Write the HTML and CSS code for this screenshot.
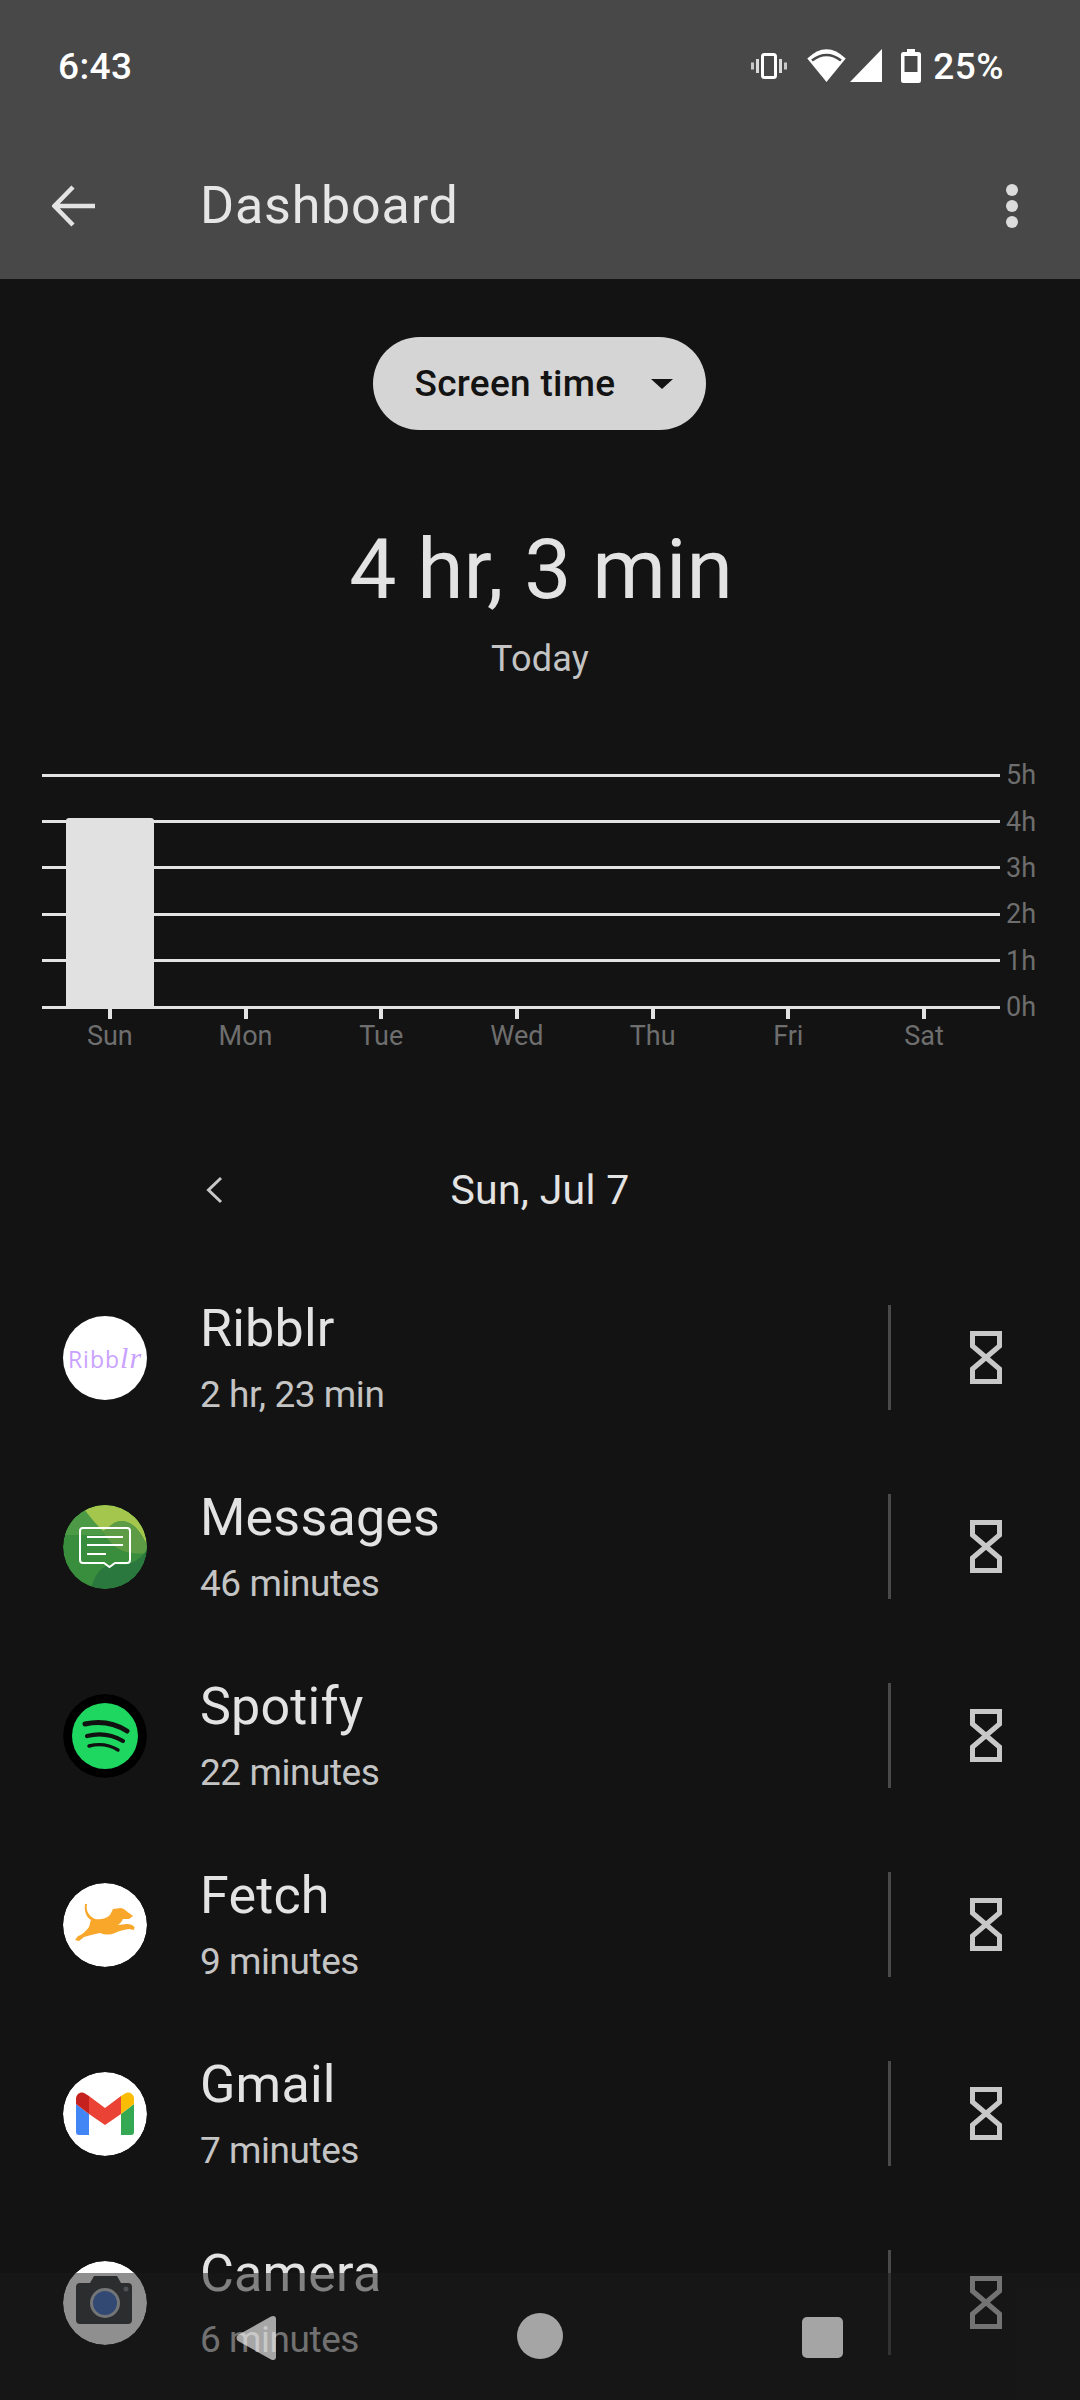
FILE: index.html
```html
<!DOCTYPE html>
<html lang="en">
<head>
<meta charset="utf-8">
<title>Dashboard</title>
<link rel="stylesheet" href="styles.css">
</head>
<body>
<div class="page">
  <header class="appbar">
    <div class="status">
      <span class="clock">6:43</span>
      <div class="status-icons">
        <svg class="ic-vibrate" width="36" height="26" viewBox="0 0 36 26"><rect x="11.5" y="1.5" width="13" height="23" rx="2" fill="none" stroke="#fff" stroke-width="3"/><path d="M6.5 6v14M29.5 6v14" stroke="#fff" stroke-opacity=".8" stroke-width="3"/><path d="M1.5 9.5v7M34.500 9.500v7" stroke="#fff" stroke-opacity=".7" stroke-width="3"/></svg>
        <svg class="ic-wifi" width="39" height="33" viewBox="0 0 39 33"><path d="M19.500 33L.3 9.500Q19.500-9 38.700 9.500Z" fill="#fff"/><path d="M5 11.500Q19.500 .5 34 11.500" fill="none" stroke="#484848" stroke-width="2.600"/></svg>
        <svg class="ic-signal" width="32" height="33" viewBox="0 0 32 33"><path d="M0 33L32 0V33Z" fill="#fff"/></svg>
        <svg class="ic-battery" width="20" height="34" viewBox="0 0 20 34"><path fill-rule="evenodd" d="M6 0h8v3h3.500A2.500 2.500 0 0 1 20 5.500V31.500A2.500 2.500 0 0 1 17.500 34H2.500A2.500 2.500 0 0 1 0 31.500V5.500A2.500 2.500 0 0 1 2.500 3H6ZM3.500 7V23H16.500V7Z" fill="#fff"/></svg>
        <span class="battery-pct">25%</span>
      </div>
    </div>
    <div class="toolbar">
      <svg class="ic-back" width="43" height="42" viewBox="0 0 43 42"><path d="M43 21H5M21 2L2.500 21 21 40" fill="none" stroke="#e3e3e3" stroke-width="4.500"/></svg>
      <h1 class="title">Dashboard</h1>
      <div class="menu"><i class="dot"></i><i class="dot"></i><i class="dot"></i></div>
    </div>
  </header>

  <main class="content">
    <div class="pill"><span>Screen time</span><i class="caret"></i></div>
    <div class="total">4 hr, 3 min</div>
    <div class="today">Today</div>

    <section class="chart">
      <div class="grid-row"><i class="line"></i><span class="h">5h</span></div>
      <div class="grid-row"><i class="line"></i><span class="h">4h</span></div>
      <div class="grid-row"><i class="line"></i><span class="h">3h</span></div>
      <div class="grid-row"><i class="line"></i><span class="h">2h</span></div>
      <div class="grid-row"><i class="line"></i><span class="h">1h</span></div>
      <div class="grid-row"><i class="line"></i><span class="h">0h</span></div>
      <div class="bar"></div>
      <div class="days">
        <div class="day">Sun</div><div class="day">Mon</div><div class="day">Tue</div><div class="day">Wed</div><div class="day">Thu</div><div class="day">Fri</div><div class="day">Sat</div>
      </div>
    </section>

    <div class="datenav">
      <svg class="chev" width="18" height="28" viewBox="0 0 18 28"><path d="M16 2L3.500 14 16 26" fill="none" stroke="#c8c8c8" stroke-width="3"/></svg>
      <span class="date">Sun, Jul 7</span>
    </div>

    <ul class="apps">
      <li class="app">
        <div class="avatar white"><span class="ribblr">Ribb<em>lr</em></span></div>
        <div class="meta"><div class="name">Ribblr</div><div class="time">2 hr, 23 min</div></div>
        <i class="sep"></i>
        <svg class="hourglass" width="32" height="53" viewBox="0 0 32 53"><path d="M2.500 2.500H29.500V15L2.500 38V50.500H29.500V38L2.500 15Z" fill="none" stroke="#c8c8c8" stroke-width="5"/></svg>
      </li>
      <li class="app">
        <svg class="avatar" width="84" height="84" viewBox="0 0 84 84">
          <defs><clipPath id="mc"><circle cx="42" cy="42" r="42"/></clipPath></defs>
          <g clip-path="url(#mc)">
            <rect width="84" height="84" fill="#388e3c"/>
            <path d="M0 0H84V30H0Z" fill="#4c9a45"/>
            <path d="M18 0H84V40C78 28 72 18 60 16 50 15 46 24 40 26 30 16 24 8 18 0Z" fill="#a5c64c"/>
            <path d="M40 26C46 24 50 15 60 16 72 18 78 28 84 40V48C70 50 50 48 40 26Z" fill="#5d9c45"/>
            <path d="M28 84C34 62 44 58 58 60 70 60 80 52 84 44V84Z" fill="#2a783e"/>
            <g fill="none" stroke="#fff">
              <path d="M20 23H64A3 3 0 0 1 67 26V55A3 3 0 0 1 64 58H52L46.500 62 41 58H20A3 3 0 0 1 17 55V26A3 3 0 0 1 20 23Z" stroke-width="2"/>
              <path d="M24 32H60M24 40H60M24 49H43" stroke-width="2"/>
            </g>
          </g>
        </svg>
        <div class="meta"><div class="name">Messages</div><div class="time">46 minutes</div></div>
        <i class="sep"></i>
        <svg class="hourglass" width="32" height="53" viewBox="0 0 32 53"><path d="M2.500 2.500H29.500V15L2.500 38V50.500H29.500V38L2.500 15Z" fill="none" stroke="#c8c8c8" stroke-width="5"/></svg>
      </li>
      <li class="app">
        <svg class="avatar" width="84" height="84" viewBox="0 0 84 84">
          <circle cx="42" cy="42" r="42" fill="#000"/>
          <circle cx="42" cy="42" r="33" fill="#1ed760"/>
          <g fill="none" stroke="#111" stroke-linecap="round">
            <path d="M22 30Q45 25 64 37" stroke-width="5"/>
            <path d="M24 42Q43 37 60 47" stroke-width="4.200"/>
            <path d="M26 52Q42 48 55 56" stroke-width="3.400"/>
          </g>
        </svg>
        <div class="meta"><div class="name">Spotify</div><div class="time">22 minutes</div></div>
        <i class="sep"></i>
        <svg class="hourglass" width="32" height="53" viewBox="0 0 32 53"><path d="M2.500 2.500H29.500V15L2.500 38V50.500H29.500V38L2.500 15Z" fill="none" stroke="#c8c8c8" stroke-width="5"/></svg>
      </li>
      <li class="app">
        <svg class="avatar" width="84" height="84" viewBox="0 0 84 84">
          <circle cx="42" cy="42" r="42" fill="#fff"/>
          <path d="M24 21C22.500 28 26 33 32 36 37 37 43 36 47 32L50 26 58 25C62 26 64 29 66 30L70 33 66 36 60 36C58 40 56 41 55 42L64 41C67 41 70 42 71.500 44L71 47 66 46C60 47 55 48 52 50 47 52 42 52 37 50 30 51 26 53 21 54L16 58 12 57 15 53C19 52 23 48 26 44 27 41 27 39 28 37 23 34 21 28 22 21Z" fill="#f9a72b"/>
        </svg>
        <div class="meta"><div class="name">Fetch</div><div class="time">9 minutes</div></div>
        <i class="sep"></i>
        <svg class="hourglass" width="32" height="53" viewBox="0 0 32 53"><path d="M2.500 2.500H29.500V15L2.500 38V50.500H29.500V38L2.500 15Z" fill="none" stroke="#c8c8c8" stroke-width="5"/></svg>
      </li>
      <li class="app">
        <svg class="avatar" width="84" height="84" viewBox="0 0 84 84">
          <circle cx="42" cy="42" r="42" fill="#fff"/>
          <path d="M13 32L26 42V63H16A3 3 0 0 1 13 60Z" fill="#4285f4"/>
          <path d="M58 42L71 32V60A3 3 0 0 1 68 63H58Z" fill="#34a853"/>
          <path d="M58 42V24L62 21.500C66 19 71 22 71 27V32Z" fill="#fbbc04"/>
          <path d="M13 32V27C13 22 18 19 22 21.500L26 24V42Z" fill="#c5221f"/>
          <path d="M26 42V24L42 36 58 24V42L42 53Z" fill="#ea4335"/>
        </svg>
        <div class="meta"><div class="name">Gmail</div><div class="time">7 minutes</div></div>
        <i class="sep"></i>
        <svg class="hourglass" width="32" height="53" viewBox="0 0 32 53"><path d="M2.500 2.500H29.500V15L2.500 38V50.500H29.500V38L2.500 15Z" fill="none" stroke="#c8c8c8" stroke-width="5"/></svg>
      </li>
      <li class="app">
        <svg class="avatar" width="84" height="84" viewBox="0 0 84 84">
          <circle cx="42" cy="42" r="42" fill="#fff"/>
          <path d="M17 22H27L31 15H54L58 22H65A4 4 0 0 1 69 26V59A4 4 0 0 1 65 63H17A4 4 0 0 1 13 59V26A4 4 0 0 1 17 22Z" fill="#3c4043"/>
          <circle cx="42" cy="42" r="15" fill="#c8ccd0"/>
          <circle cx="42" cy="42" r="12" fill="#4a76c8"/>
          <circle cx="63" cy="28" r="2.500" fill="#80868b"/>
        </svg>
        <div class="meta"><div class="name">Camera</div><div class="time">6 minutes</div></div>
        <i class="sep"></i>
        <svg class="hourglass" width="32" height="53" viewBox="0 0 32 53"><path d="M2.500 2.500H29.500V15L2.500 38V50.500H29.500V38L2.500 15Z" fill="none" stroke="#c8c8c8" stroke-width="5"/></svg>
      </li>
    </ul>
  </main>

  <nav class="navbar">
    <svg class="nav-back" width="42" height="46" viewBox="0 0 42 46"><path d="M2 20L35 1.500C38 0 40 1.500 40 4V42C40 44.500 38 46 35 44.500L2 26C0 24.500 0 21.500 2 20Z" fill="#fff" fill-opacity=".62"/></svg>
    <i class="nav-home"></i>
    <i class="nav-recent"></i>
  </nav>
</div>
</body>
</html>
```

FILE: styles.css
```css
* { box-sizing: border-box; }
html, body { margin: 0; padding: 0; }
body {
  background: #131313;
  font-family: Roboto, "Noto Sans", sans-serif;
  color: #e3e3e3;
}
.page { position: relative; width: 1080px; height: 2400px; overflow: hidden; background: #131313; }

.appbar { height: 279px; background: #484848; }
.status { height: 132px; display: flex; align-items: center; justify-content: space-between; padding: 0 76px 0 58px; }
.clock { font-size: 37px; font-weight: 500; color: #fff; letter-spacing: .4px; }
.status-icons { display: flex; align-items: center; }
.ic-vibrate { margin-right: 20px; }
.ic-wifi { margin-right: 4px; margin-top: -1px; }
.ic-signal { margin-right: 19px; margin-top: -1px; }
.ic-battery { margin-right: 12px; margin-top: -1px; }
.battery-pct { font-size: 37px; font-weight: 500; color: #fff; letter-spacing: .5px; }

.toolbar { height: 147px; display: flex; align-items: center; padding: 0 62px 0 52px; }
.title { flex: 1; margin: 0 0 0 105px; font-size: 52px; font-weight: 400; letter-spacing: .8px; color: #e6e6e6; }
.menu { display: flex; flex-direction: column; gap: 4px; }
.dot { display: block; width: 12px; height: 12px; border-radius: 50%; background: #dcdcdc; }

.content { display: flex; flex-direction: column; align-items: center; }
.pill { margin: 58px 2px 0 0; width: 333px; height: 93px; border-radius: 47px; background: #d5d5d5; color: #131313; display: flex; align-items: center; padding-left: 42px; font-size: 37px; font-weight: 500; letter-spacing: .3px; }
.caret { margin-left: 36px; width: 0; height: 0; border-left: 11px solid transparent; border-right: 11px solid transparent; border-top: 10px solid #131313; }
.total { margin: 95px 0 0 2px; font-size: 84px; line-height: 90px; color: #e3e3e3; }
.today { margin-top: 22px; font-size: 36px; line-height: 44px; letter-spacing: .2px; color: #c4c4c4; }

.chart { position: relative; align-self: stretch; margin: 71px 0 0 42px; }
.grid-row { height: 46.4px; display: flex; align-items: center; }
.line { display: block; width: 958px; height: 3px; background: #e3e3e3; }
.h { margin-left: 6px; font-size: 27px; color: #6e6e6e; }
.bar { position: absolute; left: 24px; top: 66px; width: 88px; height: 190px; background: #e1e1e1; border-radius: 3px 3px 0 0; }
.days { display: grid; grid-template-columns: repeat(7, 135.7px); margin-top: -22px; }
.day { padding-top: 11px; text-align: center; font-size: 27px; line-height: 34px; color: #6e6e6e; position: relative; }
.day::before { content: ""; position: absolute; left: 50%; top: 0; width: 4px; height: 11px; margin-left: -2px; background: #e3e3e3; }

.datenav { position: relative; margin-top: 112px; height: 50px; align-self: stretch; display: flex; align-items: center; justify-content: center; }
.chev { position: absolute; left: 205px; top: 11px; }
.date { font-size: 41px; letter-spacing: .3px; color: #e3e3e3; }

.apps { list-style: none; margin: 48px 0 0; padding: 0; align-self: stretch; }
.app { height: 189px; display: flex; align-items: center; padding: 0 78px 0 63px; }
.avatar { flex: none; width: 84px; height: 84px; border-radius: 50%; display: flex; align-items: center; justify-content: center; }
.white { background: #fff; }
.ribblr { font-family: "Open Sans", sans-serif; font-size: 23px; font-weight: 500; letter-spacing: 1px; color: #c9a2ff; }
.ribblr em { font-family: "Liberation Serif", serif; font-size: 30px; }
.meta { flex: 1; margin-left: 53px; }
.name { font-size: 52px; line-height: 62px; letter-spacing: .2px; color: #e3e3e3; }
.time { margin-top: 13px; font-size: 37px; line-height: 44px; letter-spacing: -.45px; color: #c4c4c4; }
.sep { display: block; width: 3px; height: 105px; background: #4a4a4a; margin-right: 79px; }

.navbar { position: absolute; left: 0; right: 0; bottom: 0; height: 127px; background: rgba(27, 27, 27, .49); }
.nav-back { position: absolute; left: 236px; top: 42px; }
.nav-home { position: absolute; left: 517px; top: 40px; width: 46px; height: 46px; border-radius: 50%; background: #a5a5a5; }
.nav-recent { position: absolute; left: 802px; top: 44px; width: 41px; height: 41px; border-radius: 5px; background: #a5a5a5; }
```
